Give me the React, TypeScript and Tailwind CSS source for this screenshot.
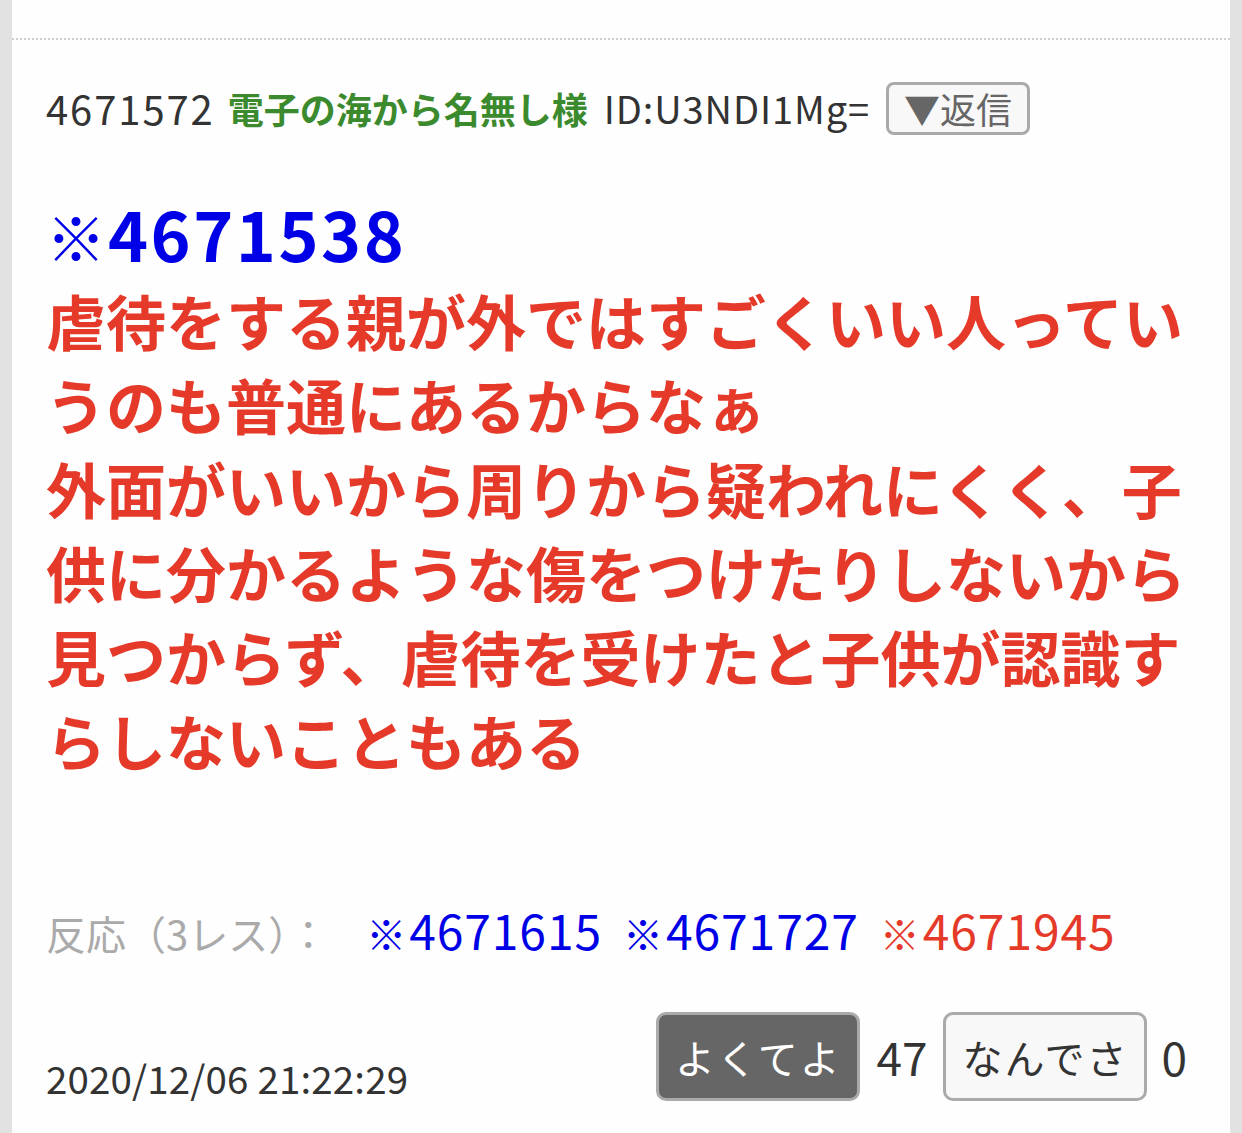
import React from 'react'

const font = '[font-family:"Noto_Sans_CJK_JP","Noto_Sans",sans-serif]'

interface Reply {
  no: string
  red?: boolean
}

const replies: Reply[] = [
  { no: '4671615' },
  { no: '4671727' },
  { no: '4671945', red: true },
]

export default function App() {
  return (
    <div className={`min-h-screen bg-[#e2e2e2] px-[12px] ${font}`}>
      <div className="bg-[#fefefe] pt-[38px] min-h-[1133px]">
        <article className="border-t-2 border-dotted border-[#cfcfcf] px-[34px] pt-[40px]">
          {/* header */}
          <div className="flex items-center leading-[56px] text-[#333]">
            <span className="text-[40px] tracking-[1.9px]">4671572</span>
            <span className="ml-[13px] text-[36px] font-bold text-[#3c8a2e]">電子の海から名無し様</span>
            <span className="ml-[16px] text-[38px] tracking-[0.9px]">ID:U3NDI1Mg=</span>
            <button className="ml-[16px] h-[53px] px-[15px] rounded-[8px] border-[3px] border-[#aaa] bg-[#f8f8f8] text-[#666] text-[36px] leading-none flex items-center">
              ▼返信
            </button>
          </div>

          {/* body */}
          <div className="mt-[55px] text-[60px] leading-[84px] font-bold text-[#e53a2a]">
            <div className="text-[#0000e6]">
              ※<span className="text-[68px] tracking-[2.5px] ml-[2px]">4671538</span>
            </div>
            <div>
              虐待をする親が外ではすごくいい人っていうのも普通にあるからなぁ
              <br />
              外面がいいから周りから疑われにくく、子供に分かるような傷をつけたりしないから見つからず、虐待を受けたと子供が認識すらしないこともある
            </div>
          </div>

          {/* replies */}
          <div className="mt-[119px] flex items-baseline text-[40px] leading-[56px] text-[#aaa]">
            <span>反応（3レス）：</span>
            <div className="flex items-baseline gap-[21px] ml-[38px]">
              {replies.map((r) => (
                <span key={r.no} className={r.red ? 'text-[#e53a2a]' : 'text-[#0000e6]'}>
                  ※<span className="text-[48px] tracking-[0.9px] ml-[3px]">{r.no}</span>
                </span>
              ))}
            </div>
          </div>

          {/* footer */}
          <div className="mt-[51px] flex items-end justify-between">
            <span className="text-[38.5px] tracking-[0.15px] leading-[40px] text-[#333] mb-[4px]">2020/12/06 21:22:29</span>
            <div className="flex items-center gap-[16px] mr-[9px] text-[46px] text-[#333]">
              <button className="h-[89px] w-[204px] rounded-[10px] border-[3px] border-[#aaa] bg-[#666] text-white text-[40px] leading-none tracking-[2px]">
                よくてよ
              </button>
              <span>47</span>
              <button className="h-[89px] w-[204px] rounded-[10px] border-[3px] border-[#aaa] bg-[#f8f8f8] text-[#333] text-[40px] leading-none tracking-[2px]">
                なんでさ
              </button>
              <span className="-ml-[2px]">0</span>
            </div>
          </div>
        </article>
      </div>
    </div>
  )
}
